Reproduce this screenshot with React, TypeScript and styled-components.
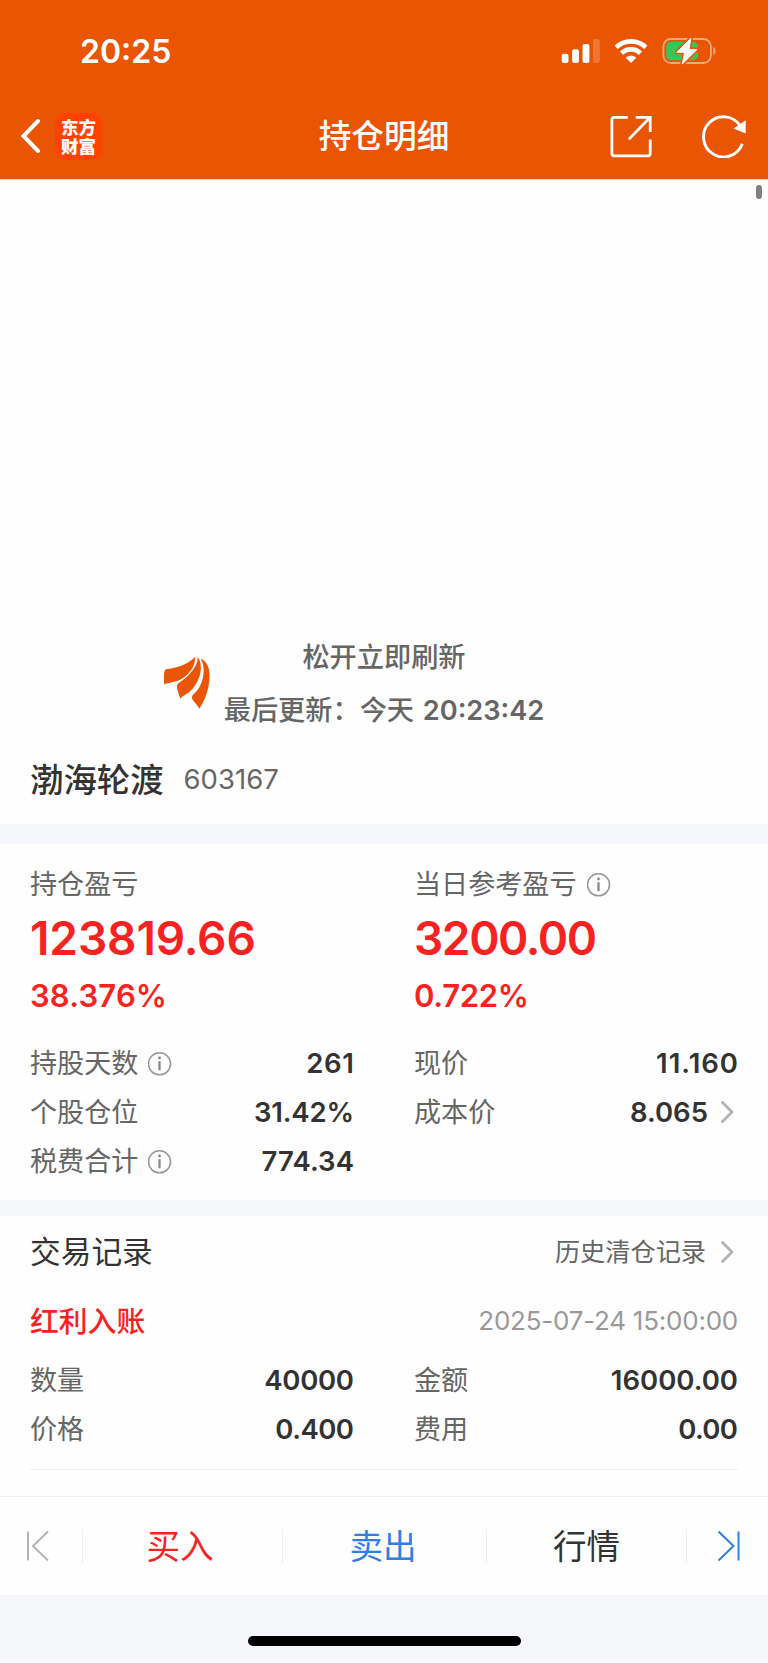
import React from "react";
import styled, { createGlobalStyle } from "styled-components";

const GlobalStyle = createGlobalStyle`
  *, *::before, *::after { box-sizing: border-box; }
  html, body { margin: 0; padding: 0; background: #fff; }
  body { font-family: Inter, "Noto Sans CJK SC", sans-serif; color: #333; }
  svg { display: block; flex: none; }
`;

const Screen = styled.div`
  width: 768px;
  height: 1663px;
  overflow: hidden;
  display: flex;
  flex-direction: column;
  background: #fefefe;
`;

const Header = styled.header`
  height: 180px;
  flex: none;
  background: #ea5504;
  border-bottom: 1px solid #f9c9ad;
  color: #fff;
`;

const StatusBar = styled.div`
  height: 94px;
  padding: 8px 51px 0 80px;
  display: flex;
  align-items: center;
  justify-content: space-between;
`;

const Clock = styled.span`
  padding-top: 2px;
  font-size: 32px;
  font-weight: 600;
  line-height: 40px;
`;

const StatusIcons = styled.div`
  display: flex;
  align-items: center;
  gap: 13px;
`;

const NavBar = styled.div`
  height: 85px;
  padding: 0 20px 1px;
  display: grid;
  grid-template-columns: 1fr auto 1fr;
  align-items: center;
`;

const NavLeft = styled.div`
  display: flex;
  align-items: center;
  gap: 13px;
`;

const NavRight = styled.div`
  display: flex;
  align-items: center;
  justify-content: flex-end;
  gap: 49px;
`;

const Brand = styled.div`
  width: 47px;
  height: 47px;
  padding: 4px 5px 0 6px;
  border-radius: 10px;
  background: #ff4200;
  font-family: "Noto Sans CJK SC", sans-serif;
  font-size: 17.5px;
  font-weight: 900;
  line-height: 19px;
`;

const Title = styled.h1`
  margin: 0;
  font-size: 32.7px;
  font-weight: 500;
  line-height: 44px;
`;

const PullArea = styled.section`
  height: 559px;
  flex: none;
  padding-right: 6px;
  display: flex;
  flex-direction: column;
  justify-content: space-between;
  align-items: flex-end;
`;

const ScrollThumb = styled.div`
  width: 6px;
  height: 14px;
  margin-top: 5px;
  border-radius: 3px;
  background: #808080;
`;

const Refresh = styled.div`
  width: 762px;
  height: 108px;
  padding-left: 163px;
  display: flex;
  gap: 13px;

  svg { margin-top: 25px; }
`;

const RefreshText = styled.div`
  width: 320px;
  display: flex;
  flex-direction: column;
  align-items: center;
  color: #666;
  font-size: 27.2px;
  font-weight: 500;
  line-height: 53px;
  white-space: nowrap;
`;

const Stamp = styled.span`
  margin-left: 1.5px;
  font-weight: 600;
`;

const StockHeading = styled.section`
  height: 85px;
  flex: none;
  padding: 0 30px 4px;
  display: flex;
  align-items: center;
  gap: 20px;
`;

const StockName = styled.h2`
  margin: 0;
  font-size: 33.4px;
  font-weight: 500;
  line-height: 44px;
`;

const StockCode = styled.span`
  padding-bottom: 2px;
  color: #666;
  font-size: 27.5px;
`;

const Band = styled.div<{ $height: number }>`
  height: ${(p) => p.$height}px;
  flex: none;
  background: #f5f7fa;
`;

const Holdings = styled.section`
  height: 356px;
  flex: none;
  padding: 19px 30px 0;
`;

const Columns = styled.div`
  display: grid;
  grid-template-columns: 324px 324px;
  column-gap: 60px;
`;

const Profit = styled.div`
  height: 175px;
  color: #f82222;
`;

const Label = styled.span`
  height: 42px;
  padding-top: 2px;
  display: flex;
  align-items: center;
  gap: 10px;
  color: #666;
  font-size: 27.1px;
  font-weight: 400;
  line-height: 40px;
  white-space: nowrap;
`;

const Amount = styled.div<{ $track: number }>`
  margin-top: 5px;
  font-size: 46px;
  font-weight: 600;
  line-height: 56px;
  letter-spacing: ${(p) => p.$track}px;
`;

const Percent = styled.div<{ $track: number }>`
  margin-top: 10px;
  font-size: 31px;
  font-weight: 600;
  line-height: 40px;
  letter-spacing: ${(p) => p.$track}px;
`;

const Row = styled.div`
  height: 49px;
  display: flex;
  align-items: center;
  justify-content: space-between;
`;

const Value = styled.span<{ $track: number }>`
  display: flex;
  align-items: center;
  gap: 13px;
  margin-right: ${(p) => -p.$track}px;
  font-size: 27.5px;
  font-weight: 600;
  letter-spacing: ${(p) => p.$track}px;
`;

const Records = styled.section`
  height: 280px;
  flex: none;
  padding: 0 30px;
`;

const RecordsHead = styled.div`
  height: 72px;
  display: flex;
  align-items: center;
  justify-content: space-between;
`;

const RecordsTitle = styled.h3`
  margin: 0;
  padding-bottom: 5px;
  font-size: 30.7px;
  font-weight: 400;
`;

const HistoryLink = styled.a`
  display: flex;
  align-items: center;
  gap: 15px;
  color: #666;
  font-size: 25.2px;
`;

const HistoryText = styled.span`
  padding-bottom: 4px;
`;

const RecordTop = styled.div`
  height: 67px;
  display: flex;
  align-items: center;
  justify-content: space-between;
`;

const RecordKind = styled.span`
  padding-bottom: 5px;
  color: #f82222;
  font-size: 28.8px;
  font-weight: 500;
`;

const RecordTime = styled.time`
  padding-bottom: 2px;
  color: #999;
  font-size: 26px;
  letter-spacing: -0.23px;
`;

const RecordBody = styled.div`
  height: 115px;
  border-bottom: 1px solid #eeeff1;
`;

const Footer = styled.nav`
  height: 99px;
  flex: none;
  border-top: 1px solid #eeeff1;
  display: flex;
  align-items: center;
`;

const Step = styled.button`
  width: 82px;
  padding: 0 6px 0 0;
  border: 0;
  background: none;
  display: flex;
  justify-content: center;
`;

const Action = styled.button<{ $width: number; $color: string; $inset?: number }>`
  width: ${(p) => p.$width}px;
  height: 34px;
  padding: 1px ${(p) => p.$inset ?? 0}px 0 0;
  border: 0;
  border-left: 1px solid #eceef0;
  background: none;
  color: ${(p) => p.$color};
  font-family: inherit;
  font-size: 33.6px;
  line-height: 34px;
`;

const FooterEnd = styled.div`
  width: 82px;
  height: 34px;
  border-left: 1px solid #eceef0;
  display: flex;
  justify-content: center;
  align-items: center;
`;

const HomeArea = styled.div`
  height: 67px;
  flex: none;
  padding: 41px 0 0 248px;
  background: #f5f7fa;
`;

const HomeIndicator = styled.div`
  width: 273px;
  height: 10px;
  border-radius: 5px;
  background: #000;
`;

const InfoIcon = () => (
  <svg width="24" height="24" viewBox="0 0 24 24" fill="none">
    <circle cx="11.5" cy="11.8" r="11" stroke="#999" strokeWidth="1.6" />
    <circle cx="11.5" cy="6" r="1.4" fill="#888" />
    <path d="M11.5 9.2V18.2" stroke="#888" strokeWidth="2.3" />
  </svg>
);

const Chevron = () => (
  <svg width="17" height="24" viewBox="0 0 17 24" fill="none">
    <path d="M1.5 2.5L11 12L1.5 21.5" stroke="#b4b4b4" strokeWidth="2.9" strokeLinecap="round" strokeLinejoin="round" />
  </svg>
);

const Signal = () => (
  <svg width="40" height="26" viewBox="0 0 40 26" fill="#fff">
    <rect x="0.7" y="15.8" width="6.8" height="9.2" rx="2" />
    <rect x="11.1" y="11.3" width="6.8" height="13.7" rx="2" />
    <rect x="21.6" y="6" width="6.8" height="19" rx="2" />
    <rect x="32" y="1" width="6.8" height="24" rx="2" opacity="0.2" />
  </svg>
);

const Wifi = () => (
  <svg width="34" height="26" viewBox="0 0 34 26" fill="none" stroke="#fff" strokeWidth="4.7">
    <path d="M2.2 9.4C10.2 1.4 23.8 1.4 31.8 9.4" />
    <path d="M7.6 15.2C12.8 10.2 21.2 10.2 26.4 15.2" />
    <path d="M17 25L11.8 19.7C14.6 17.2 19.4 17.2 22.2 19.7Z" fill="#fff" stroke="none" />
  </svg>
);

const Battery = () => (
  <svg width="56" height="30" viewBox="0 0 56 30">
    <rect x="2.4" y="3" width="47.5" height="24" rx="7.5" fill="none" stroke="#f5a780" strokeWidth="1.8" />
    <path d="M52.4 11C55.1 12 55.1 18 52.4 19Z" fill="#f5a780" />
    <rect x="5.2" y="5.8" width="31.6" height="18.4" rx="4.8" fill="#34c759" />
    <path d="M29.9 2.2L15.7 16.3H23.7L21.3 28L35.9 13.6H28Z" fill="#fff" stroke="#ea5504" strokeWidth="4" strokeLinejoin="round" />
    <path d="M29.9 2.2L15.7 16.3H23.7L21.3 28L35.9 13.6H28Z" fill="#fff" stroke="#fff" strokeWidth="1" strokeLinejoin="round" />
  </svg>
);

const BackIcon = () => (
  <svg width="22" height="38" viewBox="0 0 22 38" fill="none">
    <path d="M18 4L3.5 19L18 34" stroke="#fff" strokeWidth="4" strokeLinecap="round" strokeLinejoin="miter" />
  </svg>
);

const ShareIcon = () => (
  <svg width="44" height="44" viewBox="0 0 44 44" fill="none" stroke="#fff" strokeWidth="2.8">
    <path d="M18.8 3.3H5.2Q2.9 3.3 2.9 5.5V39.5Q2.9 41.8 5.2 41.8H39Q41.2 41.8 41.2 39.5V25.5" />
    <path d="M26.8 3.3H41.2V18M41 3.5L19.8 25.4" />
  </svg>
);

const ReloadIcon = () => (
  <svg width="46" height="44" viewBox="0 0 46 44" fill="none">
    <path d="M40.3 29.8A20 20.1 0 1 1 38.2 11.8" stroke="#fff" strokeWidth="2.9" />
    <path d="M43.7 6.2V19.4L31.5 14.4Z" fill="#fff" />
  </svg>
);

const Leaf = () => (
  <svg width="48" height="54" viewBox="0 0 48 54" fill="#ea5504">
    <path d="M32.3 .8C28 5.5 18 12 3 13.2C1 14.5 .5 18 1.3 28.6C5 26.5 11 26.2 15.5 24.5C25 20.5 32.2 11.5 32.3 .8Z" />
    <path d="M34.6 .8C35.8 6.5 29 18.5 17.5 25.7C12.5 28.5 13.8 31.5 15.2 36L17.3 42.8C20 39.5 25.5 37.5 29.4 33C37.5 23.8 41 9.8 34.6 .8Z" />
    <path d="M37.8 2.8C44.8 5.8 47.5 13.5 46.3 24.8C45 36.2 41.2 45.5 36.4 52.7C34.3 48.8 30.6 45.8 29 42.5C28.5 38.5 32 37.5 34.2 34.5C41.2 25.5 42.8 11.8 37.8 2.8Z" />
  </svg>
);

const FirstIcon = () => (
  <svg width="24" height="32" viewBox="0 0 24 32" fill="none" stroke="#b5b5b5" strokeWidth="2">
    <path d="M2 1.5V30.5M22 1.5L7 16L22 30.5" />
  </svg>
);

const LastIcon = () => (
  <svg width="24" height="32" viewBox="0 0 24 32" fill="none" stroke="#2f7fe6" strokeWidth="2">
    <path d="M22.5 1.5V30.5M2.5 1.5L17.5 16L2.5 30.5" />
  </svg>
);

interface FieldProps {
  label: string;
  value: string;
  info?: boolean;
  link?: boolean;
  track?: number;
}

const Field = ({ label, value, info, link, track = 0 }: FieldProps) => (
  <Row>
    <Label>
      {label}
      {info && <InfoIcon />}
    </Label>
    <Value $track={track}>
      {value}
      {link && <Chevron />}
    </Value>
  </Row>
);

export default function App() {
  return (
    <>
      <GlobalStyle />
      <Screen>
        <Header>
          <StatusBar>
            <Clock>20:25</Clock>
            <StatusIcons>
              <Signal />
              <Wifi />
              <Battery />
            </StatusIcons>
          </StatusBar>
          <NavBar>
            <NavLeft>
              <BackIcon />
              <Brand>东方财富</Brand>
            </NavLeft>
            <Title>持仓明细</Title>
            <NavRight>
              <ShareIcon />
              <ReloadIcon />
            </NavRight>
          </NavBar>
        </Header>

        <PullArea>
          <ScrollThumb />
          <Refresh>
            <Leaf />
            <RefreshText>
              <span>松开立即刷新</span>
              <span>
                最后更新：今天 <Stamp>20:23:42</Stamp>
              </span>
            </RefreshText>
          </Refresh>
        </PullArea>

        <StockHeading>
          <StockName>渤海轮渡</StockName>
          <StockCode>603167</StockCode>
        </StockHeading>
        <Band $height={20} />

        <Holdings>
          <Columns>
            <Profit>
              <Label>持仓盈亏</Label>
              <Amount $track={-0.1}>123819.66</Amount>
              <Percent $track={0.15}>38.376%</Percent>
            </Profit>
            <Profit>
              <Label>
                当日参考盈亏
                <InfoIcon />
              </Label>
              <Amount $track={-1.4}>3200.00</Amount>
              <Percent $track={-0.3}>0.722%</Percent>
            </Profit>
            <Field label="持股天数" value="261" info track={0.7} />
            <Field label="现价" value="11.160" track={1} />
            <Field label="个股仓位" value="31.42%" track={-0.2} />
            <Field label="成本价" value="8.065" link />
            <Field label="税费合计" value="774.34" info track={0.1} />
          </Columns>
        </Holdings>
        <Band $height={16} />

        <Records>
          <RecordsHead>
            <RecordsTitle>交易记录</RecordsTitle>
            <HistoryLink>
              <HistoryText>历史清仓记录</HistoryText>
              <Chevron />
            </HistoryLink>
          </RecordsHead>
          <RecordTop>
            <RecordKind>红利入账</RecordKind>
            <RecordTime>2025-07-24 15:00:00</RecordTime>
          </RecordTop>
          <RecordBody>
            <Columns>
              <Field label="数量" value="40000" track={-0.3} />
              <Field label="金额" value="16000.00" />
              <Field label="价格" value="0.400" track={-0.5} />
              <Field label="费用" value="0.00" track={-0.6} />
            </Columns>
          </RecordBody>
        </Records>

        <Footer>
          <Step>
            <FirstIcon />
          </Step>
          <Action $width={200} $color="#f82222" $inset={5}>买入</Action>
          <Action $width={204} $color="#2f7fe6" $inset={3}>卖出</Action>
          <Action $width={200} $color="#333">行情</Action>
          <FooterEnd>
            <LastIcon />
          </FooterEnd>
        </Footer>
        <HomeArea>
          <HomeIndicator />
        </HomeArea>
      </Screen>
    </>
  );
}
